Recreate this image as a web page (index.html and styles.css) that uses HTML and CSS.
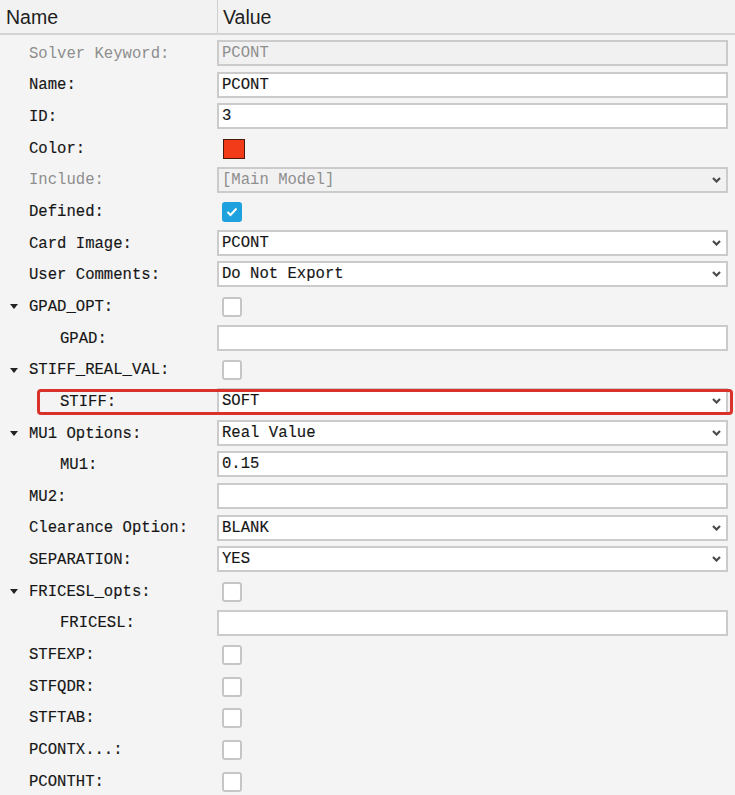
FILE: index.html
```html
<!DOCTYPE html>
<html lang="en">
<head>
    <meta charset="UTF-8">
    <meta name="viewport" content="width=device-width, initial-scale=1.0">
    <title>PCONT Properties</title>
    <link rel="stylesheet" href="styles.css">
</head>
<body>
    <div class="grid-head">
        <div class="head-name">Name</div>
        <div class="head-value">Value</div>
    </div>

    <div class="props">
        <div class="row">
            <div class="label muted">Solver Keyword:</div>
            <div class="cell"><input class="field off" value="PCONT" readonly></div>
        </div>
        <div class="row">
            <div class="label">Name:</div>
            <div class="cell"><input class="field" value="PCONT"></div>
        </div>
        <div class="row">
            <div class="label">ID:</div>
            <div class="cell"><input class="field" value="3"></div>
        </div>
        <div class="row">
            <div class="label">Color:</div>
            <div class="cell"><span class="swatch"></span></div>
        </div>
        <div class="row">
            <div class="label muted">Include:</div>
            <div class="cell">
                <div class="field off"><span>[Main Model]</span>
                    <svg class="chev" width="9" height="6" viewBox="0 0 9 6"><path d="M1 1l3.5 3.5L8 1" stroke="#4a4a4a" stroke-width="2.2" fill="none"/></svg>
                </div>
            </div>
        </div>
        <div class="row">
            <div class="label">Defined:</div>
            <div class="cell">
                <span class="check on">
                    <svg width="12" height="10" viewBox="0 0 12 10"><path d="M1.5 5l3 3 6-6.5" stroke="#fff" stroke-width="2" fill="none"/></svg>
                </span>
            </div>
        </div>
        <div class="row">
            <div class="label">Card Image:</div>
            <div class="cell">
                <div class="field"><span>PCONT</span>
                    <svg class="chev" width="9" height="6" viewBox="0 0 9 6"><path d="M1 1l3.5 3.5L8 1" stroke="#4a4a4a" stroke-width="2.2" fill="none"/></svg>
                </div>
            </div>
        </div>
        <div class="row">
            <div class="label">User Comments:</div>
            <div class="cell">
                <div class="field"><span>Do Not Export</span>
                    <svg class="chev" width="9" height="6" viewBox="0 0 9 6"><path d="M1 1l3.5 3.5L8 1" stroke="#4a4a4a" stroke-width="2.2" fill="none"/></svg>
                </div>
            </div>
        </div>
        <div class="row">
            <div class="label"><span class="twisty"><svg width="8" height="5" viewBox="0 0 8 5"><path d="M0 0h8L4 5z" fill="#222"/></svg></span>GPAD_OPT:</div>
            <div class="cell"><span class="check"></span></div>
        </div>
        <div class="row">
            <div class="label sub">GPAD:</div>
            <div class="cell"><input class="field" value=""></div>
        </div>
        <div class="row">
            <div class="label"><span class="twisty"><svg width="8" height="5" viewBox="0 0 8 5"><path d="M0 0h8L4 5z" fill="#222"/></svg></span>STIFF_REAL_VAL:</div>
            <div class="cell"><span class="check"></span></div>
        </div>
        <div class="row flag">
            <div class="label sub">STIFF:</div>
            <div class="cell">
                <div class="field"><span>SOFT</span>
                    <svg class="chev" width="9" height="6" viewBox="0 0 9 6"><path d="M1 1l3.5 3.5L8 1" stroke="#4a4a4a" stroke-width="2.2" fill="none"/></svg>
                </div>
            </div>
        </div>
        <div class="row">
            <div class="label"><span class="twisty"><svg width="8" height="5" viewBox="0 0 8 5"><path d="M0 0h8L4 5z" fill="#222"/></svg></span>MU1 Options:</div>
            <div class="cell">
                <div class="field"><span>Real Value</span>
                    <svg class="chev" width="9" height="6" viewBox="0 0 9 6"><path d="M1 1l3.5 3.5L8 1" stroke="#4a4a4a" stroke-width="2.2" fill="none"/></svg>
                </div>
            </div>
        </div>
        <div class="row">
            <div class="label sub">MU1:</div>
            <div class="cell"><input class="field" value="0.15"></div>
        </div>
        <div class="row">
            <div class="label">MU2:</div>
            <div class="cell"><input class="field" value=""></div>
        </div>
        <div class="row">
            <div class="label">Clearance Option:</div>
            <div class="cell">
                <div class="field"><span>BLANK</span>
                    <svg class="chev" width="9" height="6" viewBox="0 0 9 6"><path d="M1 1l3.5 3.5L8 1" stroke="#4a4a4a" stroke-width="2.2" fill="none"/></svg>
                </div>
            </div>
        </div>
        <div class="row">
            <div class="label">SEPARATION:</div>
            <div class="cell">
                <div class="field"><span>YES</span>
                    <svg class="chev" width="9" height="6" viewBox="0 0 9 6"><path d="M1 1l3.5 3.5L8 1" stroke="#4a4a4a" stroke-width="2.2" fill="none"/></svg>
                </div>
            </div>
        </div>
        <div class="row">
            <div class="label"><span class="twisty"><svg width="8" height="5" viewBox="0 0 8 5"><path d="M0 0h8L4 5z" fill="#222"/></svg></span>FRICESL_opts:</div>
            <div class="cell"><span class="check"></span></div>
        </div>
        <div class="row">
            <div class="label sub">FRICESL:</div>
            <div class="cell"><input class="field" value=""></div>
        </div>
        <div class="row">
            <div class="label">STFEXP:</div>
            <div class="cell"><span class="check"></span></div>
        </div>
        <div class="row">
            <div class="label">STFQDR:</div>
            <div class="cell"><span class="check"></span></div>
        </div>
        <div class="row">
            <div class="label">STFTAB:</div>
            <div class="cell"><span class="check"></span></div>
        </div>
        <div class="row">
            <div class="label">PCONTX...:</div>
            <div class="cell"><span class="check"></span></div>
        </div>
        <div class="row">
            <div class="label">PCONTHT:</div>
            <div class="cell"><span class="check"></span></div>
        </div>
    </div>
</body>
</html>
```

FILE: styles.css
```css
body {
    margin: 0;
    background: #f4f4f4;
    font-family: "Liberation Mono", monospace;
    font-size: 15.6px;
    color: #161616;
    overflow: hidden;
}

.grid-head {
    display: grid;
    grid-template-columns: 217px 1fr;
    height: 33px;
    border-bottom: 2px solid #d3d3d3;
    background: #f2f2f2;
    font-family: "Liberation Sans", Arial, sans-serif;
    font-size: 19.5px;
    color: #1e1e1e;
}

.grid-head div {
    display: flex;
    align-items: center;
    padding: 2px 0 0 6px;
}

.grid-head .head-value {
    border-left: 1px solid #d0d0d0;
    padding-left: 5px;
}

.props {
    padding-top: 3px;
}

.row {
    display: grid;
    grid-template-columns: 217px 1fr;
    height: 31.65px;
    position: relative;
}

.label {
    display: flex;
    align-items: center;
    padding-left: 29px;
    white-space: pre;
    -webkit-text-stroke: 0.15px currentColor;
}

.label.sub {
    padding-left: 60px;
}

.label.muted {
    color: #8e8e8e;
    -webkit-text-stroke: 0;
}

.twisty {
    width: 29px;
    margin-left: -29px;
    padding-left: 10px;
    box-sizing: border-box;
    display: flex;
    align-items: center;
}

.cell {
    display: flex;
    align-items: center;
    padding-right: 7px;
    min-width: 0;
}

.field {
    box-sizing: border-box;
    width: 100%;
    height: 26px;
    margin: 2px 0 0;
    align-self: flex-start;
    border: 2px solid #cbcbcb;
    background: #fff;
    font: inherit;
    color: inherit;
    padding: 0 3px;
    display: flex;
    align-items: center;
    justify-content: space-between;
    outline: none;
    -webkit-text-stroke: 0.15px currentColor;
}

.field.off {
    background: #f1f1f1;
    color: #8e8e8e;
    -webkit-text-stroke: 0;
}

.chev {
    margin-right: 2px;
}

.check {
    width: 20px;
    height: 20px;
    box-sizing: border-box;
    border: 2px solid #c6c6c6;
    border-radius: 3px;
    background: #fff;
    margin-left: 5px;
}

.check.on {
    background: #1ea1dd;
    border-color: #1ea1dd;
    display: flex;
    align-items: center;
    justify-content: center;
}

.swatch {
    width: 22px;
    height: 20px;
    box-sizing: border-box;
    border: 1px solid #4a1a10;
    background: #f23b18;
    margin-left: 6px;
}

/* red outline drawn around the STIFF row */
.row.flag::after {
    content: "";
    position: absolute;
    top: 3px;
    bottom: 3px;
    left: 37px;
    right: 2px;
    border: 3px solid #d8322a;
    border-radius: 4px;
}
```
